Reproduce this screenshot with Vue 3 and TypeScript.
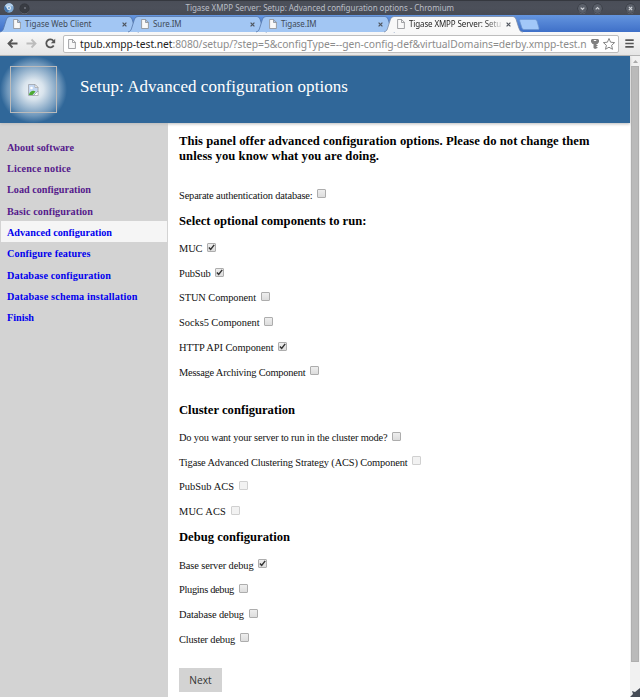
<script setup lang="ts">
interface Tab { title: string; width: number; active?: boolean }
interface MenuItem { label: string; width: number; state: 'visited' | 'current' | 'link' }
interface Option { label: string; width: number; checked?: boolean; disabled?: boolean }
interface Section { title: string; width: number; kind: string; options: Option[] }

// Tracks a line of text so that it fills the given width.
const vFit = {
  mounted(el: HTMLElement, binding: { value: number }) {
    if (!binding.value) return
    const range = document.createRange()
    range.selectNodeContents(el)
    const natural = range.getBoundingClientRect().width
    const count = (el.textContent ?? '').trim().length
    el.style.letterSpacing = `${(binding.value - natural) / count}px`
  },
}

const tabs: Tab[] = [
  { title: 'Tigase Web Client', width: 66.5 },
  { title: 'Sure.IM', width: 28.5 },
  { title: 'Tigase.IM', width: 35.5 },
  { title: 'Tigase XMPP Server: Setu', width: 92, active: true },
]

const menu: MenuItem[] = [
  { label: 'About software', width: 67, state: 'visited' },
  { label: 'Licence notice', width: 64, state: 'visited' },
  { label: 'Load configuration', width: 84, state: 'visited' },
  { label: 'Basic configuration', width: 86, state: 'visited' },
  { label: 'Advanced configuration', width: 105, state: 'current' },
  { label: 'Configure features', width: 83.5, state: 'link' },
  { label: 'Database configuration', width: 104, state: 'link' },
  { label: 'Database schema installation', width: 130.5, state: 'link' },
  { label: 'Finish', width: 27, state: 'link' },
]

const sections: Section[] = [
  { title: '', width: 0, kind: 'auth', options: [{ label: 'Separate authentication database:', width: 133.5 }] },
  {
    title: 'Select optional components to run:',
    width: 187.5,
    kind: 'components',
    options: [
      { label: 'MUC', width: 23.5, checked: true },
      { label: 'PubSub', width: 31.5, checked: true },
      { label: 'STUN Component', width: 77 },
      { label: 'Socks5 Component', width: 80.5 },
      { label: 'HTTP API Component', width: 94.5, checked: true },
      { label: 'Message Archiving Component', width: 126.5 },
    ],
  },
  {
    title: 'Cluster configuration',
    width: 116,
    kind: 'cluster',
    options: [
      { label: 'Do you want your server to run in the cluster mode?', width: 208.5 },
      { label: 'Tigase Advanced Clustering Strategy (ACS) Component', width: 228.5, disabled: true },
      { label: 'PubSub ACS', width: 55, disabled: true },
      { label: 'MUC ACS', width: 47, disabled: true },
    ],
  },
  {
    title: 'Debug configuration',
    width: 111,
    kind: 'debug',
    options: [
      { label: 'Base server debug', width: 74.5, checked: true },
      { label: 'Plugins debug', width: 55 },
      { label: 'Database debug', width: 65 },
      { label: 'Cluster debug', width: 56 },
    ],
  },
]
</script>

<template>
  <div class="window">
    <div class="titlebar">
      <svg class="logo" viewBox="0 0 10 10"><circle cx="5" cy="5" r="4.7" fill="#7fa9d3" /><path d="M5 .3A4.7 4.7 0 0 1 9.4 3.3H5L2.9 6 .9 2.8A4.7 4.7 0 0 1 5 .3Z" fill="#b4d0eb" /><path d="M.9 2.8 3.2 6.1 5 7.1 4 9.6A4.7 4.7 0 0 1 .9 2.8Z" fill="#4678b0" /><circle cx="5" cy="5" r="2.1" fill="#f1f6fb" /><circle cx="5" cy="5" r="1.300" fill="#8fb6dd" /></svg>
      <span class="knob dot"><i></i></span>
      <span v-fit="268.5" class="title">Tigase XMPP Server: Setup: Advanced configuration options - Chromium</span>
      <span class="controls">
        <svg class="knob" viewBox="0 0 10 10"><path d="m3 4 2 2 2-2" /></svg>
        <svg class="knob" viewBox="0 0 10 10"><path d="m3 6 2-2 2 2" /></svg>
        <svg class="knob close" viewBox="0 0 10 10"><path d="m3.2 3.2 3.6 3.6m0-3.6L3.2 6.8" /></svg>
      </span>
    </div>

    <div class="tabs">
      <div v-for="tab in tabs" :key="tab.title" class="tab" :class="{ active: tab.active }">
        <svg class="shape" viewBox="0 0 140 16" preserveAspectRatio="none"><path d="M0 16C3 15 3 14 4 11L6.500 3Q7.500.5 10 .5H129Q131 .5 132 3L134.500 11C136 15 136 15.500 139 16" /></svg>
        <svg class="page" viewBox="0 0 8 10"><path d="M.6.5h4l2.800 2.800v6.200H.6ZM4.500.5v3h3" /></svg>
        <span class="tab-title"><span v-fit="tab.width">{{ tab.title }}</span></span>
        <svg class="x" viewBox="0 0 5 5"><path d="m.6.6 3.800 3.800m0-3.800L.6 4.400" /></svg>
      </div>
      <svg class="new-tab" viewBox="0 0 21 11"><path d="M1.500.5H16Q17.500.5 18 2L20 9Q20.500 10.500 19 10.500H5Q3.500 10.500 3 9L.7 2Q.3.5 1.500.5Z" /></svg>
    </div>

    <div class="toolbar">
      <svg class="nav" viewBox="0 0 11 11"><path d="M10.500 5.500H2M5.500 1.500l-4 4 4 4" /></svg>
      <svg class="nav faded" viewBox="0 0 11 11"><path d="M.5 5.500H9M5.500 1.500l4 4-4 4" /></svg>
      <svg class="nav" viewBox="0 0 11 11"><path d="M8.700 7.500A4 4 0 1 1 8.500 3" /><path class="solid" d="M10.200.8v4.400H5.800Z" /></svg>
      <div class="address">
        <svg class="page" viewBox="0 0 8 10"><path d="M.6.5h4l2.800 2.800v6.200H.6ZM4.500.5v3h3" /></svg>
        <span v-fit="506.5" class="url"><b>tpub.xmpp-test.net</b>:8080/setup/?step=5&amp;configType=--gen-config-def&amp;virtualDomains=derby.xmpp-test.n</span>
        <svg class="key" viewBox="0 0 8 10"><path d="M1 0h6L8 1v2L6.500 5H5.500v1h1v1h-1v1h1v1L4 10 2.500 9V5H1.500L0 3V1ZM2.800 1v1h2.400v-1Z" fill-rule="evenodd" /></svg>
        <svg class="star" viewBox="0 0 12 12"><path d="m6 .5 1.600 3.700 4 .4-3 2.700.9 4L6 9.200l-3.500 2.100.9-4L.4 4.600l4-.4Z" /></svg>
      </div>
      <svg class="burger" viewBox="0 0 9 9"><path d="M.3 1.200h8.400M.3 4.500h8.400M.3 7.800h8.400" /></svg>
    </div>

    <div class="viewport">
      <div class="document">
        <header class="banner">
          <div class="glow">
            <div class="image-frame">
              <svg class="broken" viewBox="0 0 11 12"><path d="M.5.500h6.500l3 3V8L6 11.500H.5Z" fill="#c4d8f3" stroke="#a9afb8" /><path d="M1 10.500C2 7 5 6 7.500 7.500L4.500 11H1Z" fill="#4daa32" /><path d="M7 .5v3h3Z" fill="#fff" stroke="#999" stroke-width=".6" /><path d="m10 7-4.500 4.500h4.700Z" fill="#fff" stroke="#9aa0a5" stroke-width=".7" /><circle cx="3.500" cy="4" r="1.300" fill="#fff" /></svg>
            </div>
          </div>
          <h1 v-fit="268">Setup: Advanced configuration options</h1>
        </header>
        <div class="columns">
          <nav class="menu">
            <a v-for="item in menu" :key="item.label" v-fit="item.width" :class="item.state">{{ item.label }}</a>
          </nav>
          <main class="content">
            <h2 class="intro"><span v-fit="410.5" class="line">This panel offer advanced configuration options. Please do not change them</span> <span v-fit="200" class="line">unless you know what you are doing.</span></h2>
            <section v-for="section in sections" :key="section.kind" :class="section.kind">
              <h2 v-if="section.title" v-fit="section.width">{{ section.title }}</h2>
              <label v-for="option in section.options" :key="option.label">
                <span v-fit="option.width">{{ option.label }}</span>
                <span class="box" :class="{ disabled: option.disabled }">
                  <svg v-if="option.checked" viewBox="0 0 7 7"><path d="m.9 3.400 1.800 2L6.200.9" /></svg>
                </span>
              </label>
            </section>
            <button type="button">Next</button>
          </main>
        </div>
      </div>
      <div class="scrollbar">
        <svg class="up" viewBox="0 0 5 3"><path d="M0 3 2.500 0 5 3Z" /></svg>
        <div class="thumb"></div>
        <svg class="grip" viewBox="0 0 10 10"><path d="M10 1v9H0L3 7 2 4l3 1Z" /></svg>
      </div>
    </div>
  </div>
</template>

<style>
body { margin: 0; overflow: hidden; }
</style>

<style scoped>
* { box-sizing: border-box; }
svg { display: block; flex: none; overflow: visible; }
.window { width: 640px; height: 697px; display: flex; flex-direction: column; overflow: hidden; background: #fff; font-family: "Noto Sans", sans-serif; }
.titlebar { height: 15px; flex: none; display: flex; align-items: center; padding: 0 5px 0 4px; background: linear-gradient(#4a4e58 0, #4c505a 50%, #464a54 100%); border-top: 1px solid #35383f; }
.logo { width: 10px; height: 10px; }
.knob { width: 9px; height: 9px; border-radius: 50%; background: #5a5f69; box-shadow: 0 0 0 .5px #30343b, 0 1px 0 #686c75; }
.knob path { fill: none; stroke: #d1d4d9; stroke-width: 1.300; }
.dot { display: flex; justify-content: center; align-items: center; margin-left: 6px; background: #393c43; }
.dot i { width: 2px; height: 2px; border-radius: 50%; background: #737780; }
.title { width: 269px; margin-left: 156.500px; font-size: 8px; line-height: 14px; white-space: nowrap; color: #b9bdc5; }
.controls { margin-left: auto; display: flex; gap: 6px; }
.close { margin-left: 18px; }
.tabs { height: 17px; flex: none; display: flex; align-items: flex-end; background: linear-gradient(#6495df, #3f70c8); }
.tab { position: relative; z-index: 0; width: 138px; height: 16px; flex: none; display: flex; align-items: center; padding: 0 11.500px 0 13px; margin-right: -10px; }
.shape { position: absolute; z-index: -1; left: 0; top: 0; width: 140px; height: 16px; }
.shape path { fill: #a2c6f3; stroke: #5676a8; stroke-width: .8; }
.active { z-index: 1; }
.active .shape path { fill: #f8f8f8; stroke: #7789a6; }
.page { width: 8px; height: 10px; }
.page path { fill: #f9f9f9; stroke: #8b8d91; stroke-width: .8; }
.tab-title { flex: 1; min-width: 0; margin-left: 4px; font-size: 8px; line-height: 14px; color: #414a57; white-space: nowrap; }
.active .tab-title { color: #262626; mask-image: linear-gradient(90deg, #000 78%, transparent 98%); }
.x { width: 5px; height: 5px; }
.x path { fill: none; stroke: #4e545d; stroke-width: 1.200; }
.new-tab { width: 21px; height: 11px; margin: 0 0 2px 7px; }
.new-tab path { fill: #a2c8f8; stroke: #6b95cf; stroke-width: .7; }
.toolbar { height: 24px; flex: none; display: flex; align-items: center; padding: 0 7px; background: linear-gradient(#f8f8f8, #e6e6e6); border-bottom: 1px solid #b4b4b4; }
.nav { width: 11px; height: 11px; margin-right: 8px; }
.nav path { fill: none; stroke: #555; stroke-width: 1.800; }
.nav .solid { fill: #555; stroke: none; }
.faded path { stroke: #bcbcbc; }
.address { width: 556px; height: 18px; flex: none; display: flex; align-items: center; margin-left: -1px; padding-left: 4px; background: #fff; border: 1px solid #bdbdbd; border-radius: 2px; }
.url { width: 507px; flex: none; margin-left: 4px; font-size: 10.300px; line-height: 16px; white-space: nowrap; color: #8c8c8c; }
.url b { font-weight: 400; color: #222; }
.key { width: 8px; height: 10px; margin-left: 4px; fill: #808080; }
.star { width: 12px; height: 12px; margin-left: 4px; }
.star path { fill: #fff; stroke: #777; stroke-width: .9; }
.burger { width: 9px; height: 9px; margin-left: auto; margin-right: -1px; }
.burger path { stroke: #555; stroke-width: 1.700; }
.viewport { flex: 1; min-height: 0; display: flex; }
.document { width: 630px; display: flex; flex-direction: column; font-family: "Liberation Serif", serif; }
.banner { height: 67px; flex: none; display: flex; align-items: center; background: #306799; box-shadow: 0 1px 3px #bbb; position: relative; z-index: 1; }
.glow { width: 67px; height: 67px; display: flex; justify-content: center; align-items: center; background: radial-gradient(circle closest-side, #f4f7fa 0, #d9e4ed 30%, #6f97bb 78%, #306799 100%); }
.image-frame { width: 47px; height: 47px; display: flex; justify-content: center; align-items: center; border: 1px solid #bbb; }
.broken { width: 11px; height: 12px; }
h1 { margin: 0 0 6px 13px; font-size: 17px; line-height: 20px; font-weight: 400; color: #fff; white-space: nowrap; }
.columns { flex: 1; display: flex; min-height: 0; }
.menu { width: 168px; flex: none; display: flex; flex-direction: column; padding: 12.500px 1px 0; background: #d3d3d3; }
.menu a { height: 21.350px; flex: none; padding-left: 6px; font-size: 10.200px; line-height: 23px; font-weight: 700; color: #00e; white-space: nowrap; }
.menu .visited { color: #551a8b; }
.menu .current { background: #f5f5f5; }
.content { flex: 1; padding: 0 0 0 11px; color: #111; }
h2 { margin: 0; height: 28.800px; font-size: 12.600px; line-height: 28px; font-weight: 700; color: #000; white-space: nowrap; }
.intro { height: 59.100px; padding-top: 10.500px; line-height: 15.500px; }
.line { display: block; }
.cluster h2 { height: 40.800px; padding-top: 11.800px; }
.debug h2 { line-height: 29px; }
label { height: 24.700px; display: flex; align-items: center; padding-top: 2.300px; font-size: 10.400px; line-height: 14px; white-space: nowrap; }
label span { flex: none; }
.box { width: 9px; height: 9px; margin: 0 0 3.500px 4.500px; border: 1px solid #adadad; border-radius: 1px; background: linear-gradient(#eee, #ddd); }
.box svg { width: 7px; height: 7px; }
.box path { fill: none; stroke: #333; stroke-width: 1.500; }
.disabled { border-color: #d0d0d0; background: #f2f2f2; }
button { display: block; width: 43px; height: 24px; margin-top: 17px; padding: 0; border: 0; background: #d3d3d3; color: #333; font: 10.200px "Open Sans", sans-serif; }
.scrollbar { width: 10px; display: flex; flex-direction: column; align-items: center; background: #f1f1f1; }
.up { width: 5px; height: 3px; margin: 4px 0 3px; fill: #aaa; }
.thumb { width: 8px; height: 596px; background: #bababa; border: 1px solid #afafaf; }
.grip { width: 10px; height: 10px; margin-top: auto; fill: #454b55; }
</style>
